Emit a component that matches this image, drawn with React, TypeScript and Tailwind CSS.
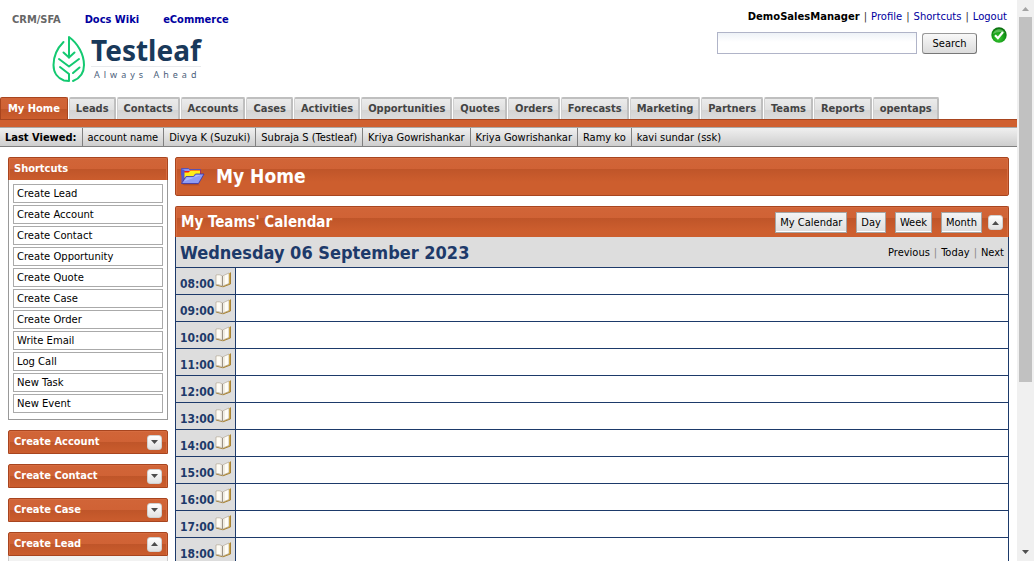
import React from 'react';

const tabs = [
  'My Home', 'Leads', 'Contacts', 'Accounts', 'Cases', 'Activities', 'Opportunities', 'Quotes',
  'Orders', 'Forecasts', 'Marketing', 'Partners', 'Teams', 'Reports', 'opentaps',
];

const lastViewed = [
  'account name', 'Divya K (Suzuki)', 'Subraja S (Testleaf)', 'Kriya Gowrishankar',
  'Kriya Gowrishankar', 'Ramy ko', 'kavi sundar (ssk)',
];

const shortcuts = [
  'Create Lead', 'Create Account', 'Create Contact', 'Create Opportunity', 'Create Quote',
  'Create Case', 'Create Order', 'Write Email', 'Log Call', 'New Task', 'New Event',
];

const hours = [
  '08:00', '09:00', '10:00', '11:00', '12:00', '13:00', '14:00', '15:00', '16:00', '17:00', '18:00',
];

const tahoma = "font-['DejaVu_Sans_Condensed','DejaVu_Sans',sans-serif]";
const verdana = "font-['DejaVu_Sans',sans-serif]";
const orange =
  'border border-[#a8451f] bg-[linear-gradient(#d16538_0,#d06235_11px,#bf5529_11px,#cd5e2e_24px)] shadow-[inset_1px_1px_0_#d66c40,inset_-1px_0_0_#d66c40]';

function Logo() {
  return (
    <a href="#home" className="ml-[52px] flex h-[50px] w-fit items-start gap-[5px]">
      <svg width="34" height="50" viewBox="0 0 34 50" fill="none" stroke="#14c971" strokeWidth="2" strokeLinecap="round" strokeLinejoin="round">
        <path d="M11.500 8C5 14.500 1.500 22.500 1.500 31c0 8 4.500 13.500 10.500 15.500l5 .500v-7L8 33" />
        <path d="M17 23.500V3C26 9.500 32 20.500 32 31c0 8-4.500 13.500-11 16" />
        <path d="M11.500 18.500l5.500 5 5.500-5M7 25l10 7.500L27 25M21 39l6.500-5.500" />
      </svg>
      <span className="flex flex-col">
        <span className="border-b border-[#e8eaec] font-['Noto_Sans',sans-serif] text-[28px] leading-[32px] font-bold text-[#19395a]">Testleaf</span>
        <span className="pl-[3px] font-['Noto_Sans',sans-serif] text-[9px] leading-[16px] tracking-[4px] text-[#4b617b]">Always Ahead</span>
      </span>
    </a>
  );
}

function CheckBall() {
  return (
    <svg width="16" height="16" viewBox="0 0 16 16">
      <defs>
        <radialGradient id="ball" cx="0.45" cy="0.7" r="0.7">
          <stop offset="0" stopColor="#3ccb35" />
          <stop offset="0.6" stopColor="#159b17" />
          <stop offset="1" stopColor="#07690c" />
        </radialGradient>
      </defs>
      <circle cx="8" cy="8" r="7.700" fill="url(#ball)" />
      <path d="M2 7C3 1.500 12 0 14 6 9 4 6 5 2 7z" fill="#8fdf88" opacity=".55" />
      <path d="M4 8.200l2.900 3L12 5" fill="none" stroke="#fff" strokeWidth="2.200" />
    </svg>
  );
}

function Folder() {
  return (
    <svg width="24" height="20" viewBox="0 0 24 20">
      <path d="M.500 1.500h7l1 1h11V8H.500z" fill="#8a94f0" stroke="#4648b8" strokeWidth=".8" />
      <path d="M2.500 4h6l1-1h10v8h-17z" fill="#f01818" />
      <path d="M2.500 5.500h5l2-2H19V11H2.500z" fill="#ffee18" />
      <path d="M.500 2v14l3-5V3z" fill="#5558cf" />
      <path d="M.500 16.500L5 9.500h7.500l2-2.500H23l-5.500 9.500z" fill="#8f9cf4" stroke="#3334a8" strokeWidth=".8" />
      <path d="M3 14.500l3-4h7.200l2-2.500h5z" fill="#b9c6ff" opacity=".7" />
      <path d="M1 17.300h16l2 1H3z" fill="#8d3c26" opacity=".7" />
    </svg>
  );
}

function Book() {
  return (
    <svg width="17" height="16" viewBox="0 0 17 16">
      <path d="M12 2.500L15.500 .500V11.500L8 15z" fill="#d9a92a" />
      <path d="M15.500 .500V12L8 14.800.800 13" fill="none" stroke="#a07a2c" strokeWidth=".9" />
      <path d="M1 3C3.500 2.500 5.500 2.800 7.500 4L14 1v10.500L7.500 14.200C5.500 13 3.500 12.500 1 12.500z" fill="#fffdf6" stroke="#a99c88" strokeWidth=".6" />
      <path d="M7.500 4v10" stroke="#9a9185" strokeWidth="1" />
      <path d="M9 4v9M6.200 4v9" stroke="#d9d3c6" strokeWidth=".8" />
    </svg>
  );
}

function Toggle({ open, name }: { open?: boolean; name: string }) {
  return (
    <button aria-label={name} aria-expanded={!!open} className="flex size-[15px] items-center justify-center rounded-[3px] border border-[#d0d0d0] bg-linear-to-b from-white to-[#e2e2e2]">
      <svg width="7" height="4" viewBox="0 0 7 4">
        <path d={open ? 'M0 4h7L3.500 0z' : 'M0 0h7L3.500 4z'} fill="#4d4d4d" />
      </svg>
    </button>
  );
}

function SidePanel({ title, open }: { title: string; open?: boolean }) {
  return (
    <section>
      <div className={`flex h-6 items-center justify-between rounded-t-[2px] px-[5px] ${orange}`}>
        <h2 className={`${tahoma} text-[11px] font-bold text-white`}>{title}</h2>
        <Toggle open={open} name={title} />
      </div>
      {open && <div className="h-40 border border-t-0 border-[#ccc] bg-[#f2f2f2]" />}
    </section>
  );
}

function CalendarButton({ children }: { children: string }) {
  return (
    <button className={`${tahoma} h-[21px] border border-[#a5a5a5] bg-linear-to-b from-[#f4f4f4] to-[#dedede] px-1 pt-px text-[11px] text-black shadow-[inset_0_-1px_0_#fff]`}>
      {children}
    </button>
  );
}

function Header() {
  return (
    <header className="flex h-[97px] justify-between">
      <div>
        <nav className={`${tahoma} flex h-[34px] items-center gap-6 pt-[6px] pl-3 text-[11px] font-bold text-[#0000a0]`}>
          <a href="#crm" className="text-[#666]">CRM/SFA</a>
          <a href="#wiki">Docs Wiki</a>
          <a href="#shop">eCommerce</a>
        </nav>
        <Logo />
      </div>
      <div className="flex flex-col items-end pt-[10px] pr-[10px]">
        <div className={`${verdana} flex gap-1 text-[10px] leading-[13px] text-[#0000a0]`}>
          <b className="text-black">DemoSalesManager</b>
          <span className="text-[#333]">|</span>
          <a href="#profile">Profile</a>
          <span className="text-[#333]">|</span>
          <a href="#shortcuts">Shortcuts</a>
          <span className="text-[#333]">|</span>
          <a href="#logout">Logout</a>
        </div>
        <form className="mt-1 flex items-start" onSubmit={(e) => e.preventDefault()}>
          <input aria-label="Search" className="mt-[5px] h-[22px] w-[200px] border border-[#b0b4c8] bg-[linear-gradient(#eef2f7,#fff_9px)] px-1 text-[11px]" />
          <button className={`${tahoma} mt-[6px] ml-[5px] h-[21px] w-[55px] rounded-[3px] border border-[#999] border-r-[#777] border-b-[#777] bg-linear-to-b from-[#f8f8f8] to-[#dcdcdc] pt-[2px] text-[11px]`}>Search</button>
          <span className="ml-[14px]"><CheckBall /></span>
        </form>
      </div>
    </header>
  );
}

function Tabs() {
  return (
    <nav className={`${tahoma} flex h-[22px] gap-px text-[11px] font-bold`}>
      {tabs.map((t, i) => (
        <a
          key={t}
          href="#tab"
          className={
            i === 0
              ? 'flex items-center rounded-t-[2px] border border-b-0 border-[#a8451f] bg-[linear-gradient(#d16538_0,#d06235_11px,#bf5529_11px,#cd5e2e_22px)] px-[7px] pt-[2px] text-white'
              : 'flex items-center rounded-t-[2px] border-t-2 border-r-2 border-l border-[#bfbfbf] border-l-[#d0d0d0] bg-[linear-gradient(#ebebeb_0,#e0e0e0_11px,#d4d4d4_11px,#dedede_22px)] pt-px pr-[5px] pl-[6px] text-[#444]'
          }
        >
          {t}
        </a>
      ))}
    </nav>
  );
}

function Calendar() {
  return (
    <section className="mt-[10px]">
      <div className={`flex h-[31px] items-center justify-between rounded-t-[2px] border-b-0 px-[5px] ${orange}`}>
        <h2 className={`${tahoma} text-[15px] leading-5 font-bold text-white`}>My Teams' Calendar</h2>
        <div className="flex items-center pt-px">
          <div className="flex gap-[9px]">
            <CalendarButton>My Calendar</CalendarButton>
            <CalendarButton>Day</CalendarButton>
            <CalendarButton>Week</CalendarButton>
            <CalendarButton>Month</CalendarButton>
          </div>
          <span className="ml-[6px]"><Toggle open name="My Teams' Calendar" /></span>
        </div>
      </div>
      <div className="flex h-[30px] items-center justify-between border-x border-[#1d3a6a] bg-[#ddd] px-1">
        <h3 className={`${tahoma} text-[18px] font-bold text-[#1d3a6a]`}>Wednesday 06 September 2023</h3>
        <div className={`${tahoma} flex gap-1 pt-[2px] text-[11px] text-black`}>
          <a href="#previous">Previous</a>
          <span className="text-[#888]">|</span>
          <a href="#today">Today</a>
          <span className="text-[#888]">|</span>
          <a href="#next">Next</a>
        </div>
      </div>
      <table className="w-full table-fixed border-collapse">
        <tbody>
          {hours.map((h) => (
            <tr key={h} className="h-[27px]">
              <th className="w-[60px] border border-[#1d3a6a] bg-[#ddd] p-0">
                <div className="flex h-[26px] items-start gap-px pt-1 pl-1">
                  <span className={`${tahoma} pt-[5px] text-[12px] leading-[14px] font-bold text-[#1d3a6a]`}>{h}</span>
                  <Book />
                </div>
              </th>
              <td className="border border-[#1d3a6a] bg-white p-0" />
            </tr>
          ))}
        </tbody>
      </table>
    </section>
  );
}

function Scrollbar() {
  return (
    <div aria-hidden="true" className="flex w-[17px] shrink-0 flex-col items-center bg-[#f0f0f0]">
      <svg width="17" height="17" viewBox="0 0 17 17"><path d="M5 11h7L8.500 7z" fill="#a3a3a3" /></svg>
      <div className="w-[13px] flex-[365] bg-[#c1c1c1]" />
      <div className="flex-[162]" />
      <svg width="17" height="17" viewBox="0 0 17 17"><path d="M5 6h7l-3.500 4z" fill="#505050" /></svg>
    </div>
  );
}

export default function App() {
  return (
    <div className="flex h-screen overflow-hidden bg-white">
      <div className="min-w-0 flex-1 overflow-hidden">
        <Header />
        <Tabs />
        <div className="h-2 border-t border-[#a8451f] bg-[#d06030]" />
        <div className={`${tahoma} flex h-5 items-stretch border-y border-t-[#aaa] border-b-[#808080] bg-linear-to-b from-[#f0f0f0] to-[#cecece] text-[11px] leading-5 text-black`}>
          <b className="px-[5px]">Last Viewed:</b>
          {lastViewed.map((item, i) => (
            <a key={i} href="#record" className="border-l border-[#808080] px-[5px]">{item}</a>
          ))}
        </div>
        <div className="flex gap-[7px] px-2 pt-[10px]">
          <aside className="flex w-40 shrink-0 flex-col gap-[10px]">
            <section>
              <div className={`flex h-[23px] items-center rounded-t-[2px] border-b-0 px-[5px] ${orange}`}>
                <h2 className={`${tahoma} text-[11px] font-bold text-white`}>Shortcuts</h2>
              </div>
              <ul className={`${verdana} flex flex-col gap-[2px] border border-t-0 border-[#999] px-1 pt-1 pb-[6px] text-[10px] leading-[17px] text-black`}>
                {shortcuts.map((s) => (
                  <li key={s} className="border border-[#aaa] px-[3px]">
                    <a href="#shortcut" className="block">{s}</a>
                  </li>
                ))}
              </ul>
            </section>
            <SidePanel title="Create Account" />
            <SidePanel title="Create Contact" />
            <SidePanel title="Create Case" />
            <SidePanel title="Create Lead" open />
          </aside>
          <main className="min-w-0 flex-1">
            <div className={`flex h-[39px] items-center gap-[11px] rounded-[2px] px-[5px] ${orange}`}>
              <Folder />
              <h1 className={`${tahoma} text-[19px] font-bold text-white`}>My Home</h1>
            </div>
            <Calendar />
          </main>
        </div>
      </div>
      <Scrollbar />
    </div>
  );
}
